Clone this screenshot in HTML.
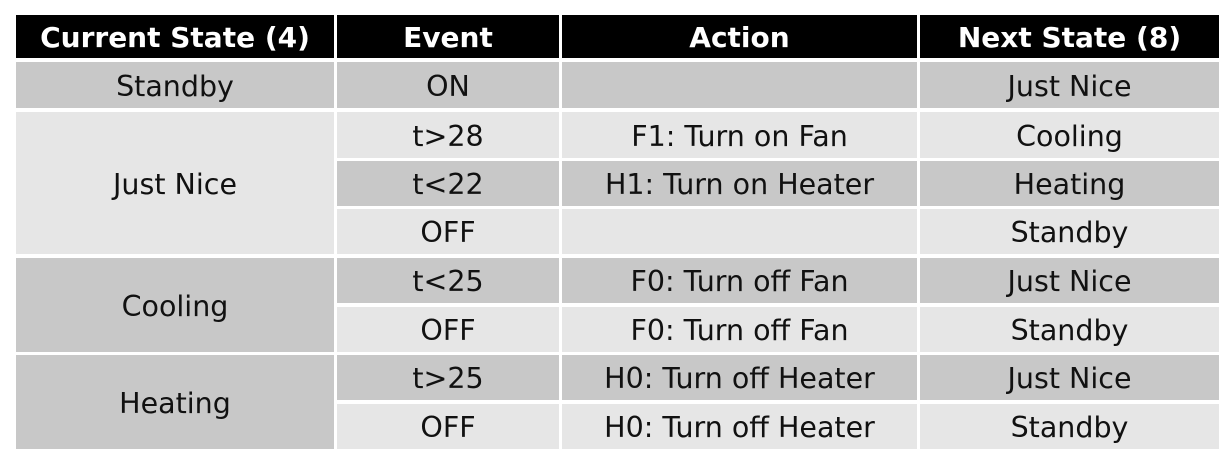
<!DOCTYPE html><html><head><style>
body{margin:0;width:1231px;height:466px;background:#fff;position:relative;overflow:hidden;font-family:"DejaVu Sans","Liberation Sans",sans-serif;}
.c{position:absolute;display:flex;align-items:center;justify-content:center;font-size:28.5px;color:#111;padding-top:2px;box-sizing:border-box;}
.h{background:#000;color:#fff;font-weight:bold;font-size:28px;}
.d{background:#c8c8c8}.l{background:#e6e6e6}
</style></head><body>
<div class="c h" style="left:16px;top:15px;width:318px;height:43px">Current State (4)</div>
<div class="c h" style="left:337px;top:15px;width:222px;height:43px">Event</div>
<div class="c h" style="left:562px;top:15px;width:355px;height:43px">Action</div>
<div class="c h" style="left:920px;top:15px;width:299px;height:43px">Next State (8)</div>

<div class="c d" style="left:16px;top:62px;width:318px;height:46px">Standby</div>
<div class="c d" style="left:337px;top:62px;width:222px;height:46px">ON</div>
<div class="c d" style="left:562px;top:62px;width:355px;height:46px"></div>
<div class="c d" style="left:920px;top:62px;width:299px;height:46px">Just Nice</div>

<div class="c l" style="left:16px;top:112px;width:318px;height:142px">Just Nice</div>
<div class="c l" style="left:337px;top:112px;width:222px;height:46px">t&gt;28</div>
<div class="c l" style="left:562px;top:112px;width:355px;height:46px">F1: Turn on Fan</div>
<div class="c l" style="left:920px;top:112px;width:299px;height:46px">Cooling</div>
<div class="c d" style="left:337px;top:161px;width:222px;height:45px">t&lt;22</div>
<div class="c d" style="left:562px;top:161px;width:355px;height:45px">H1: Turn on Heater</div>
<div class="c d" style="left:920px;top:161px;width:299px;height:45px">Heating</div>
<div class="c l" style="left:337px;top:209px;width:222px;height:45px">OFF</div>
<div class="c l" style="left:562px;top:209px;width:355px;height:45px"></div>
<div class="c l" style="left:920px;top:209px;width:299px;height:45px">Standby</div>

<div class="c d" style="left:16px;top:258px;width:318px;height:94px">Cooling</div>
<div class="c d" style="left:337px;top:258px;width:222px;height:45px">t&lt;25</div>
<div class="c d" style="left:562px;top:258px;width:355px;height:45px">F0: Turn off Fan</div>
<div class="c d" style="left:920px;top:258px;width:299px;height:45px">Just Nice</div>
<div class="c l" style="left:337px;top:307px;width:222px;height:45px">OFF</div>
<div class="c l" style="left:562px;top:307px;width:355px;height:45px">F0: Turn off Fan</div>
<div class="c l" style="left:920px;top:307px;width:299px;height:45px">Standby</div>

<div class="c d" style="left:16px;top:355px;width:318px;height:94px">Heating</div>
<div class="c d" style="left:337px;top:355px;width:222px;height:45px">t&gt;25</div>
<div class="c d" style="left:562px;top:355px;width:355px;height:45px">H0: Turn off Heater</div>
<div class="c d" style="left:920px;top:355px;width:299px;height:45px">Just Nice</div>
<div class="c l" style="left:337px;top:404px;width:222px;height:45px">OFF</div>
<div class="c l" style="left:562px;top:404px;width:355px;height:45px">H0: Turn off Heater</div>
<div class="c l" style="left:920px;top:404px;width:299px;height:45px">Standby</div>
</body></html>
